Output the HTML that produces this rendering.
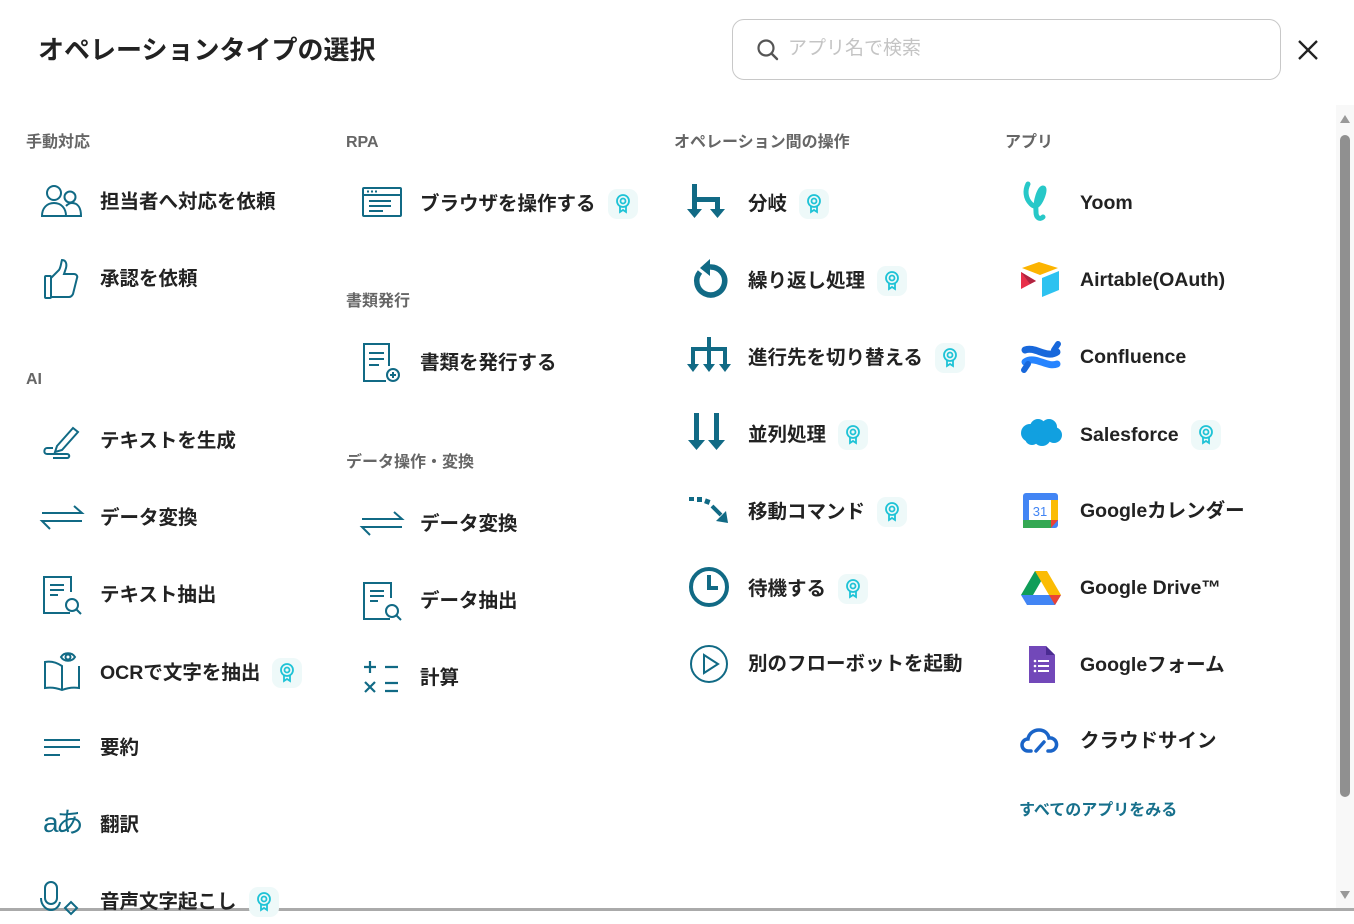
<!DOCTYPE html>
<html><head><meta charset="utf-8"><style>
*{margin:0;padding:0;box-sizing:border-box}
body{width:1354px;height:911px;overflow:hidden;background:#fff;font-family:"Liberation Sans","Noto Sans CJK JP",sans-serif;color:#222;position:relative}
.a{position:absolute}
.h{position:absolute;font-size:16px;color:#666;font-weight:600;line-height:20px}
.t{position:absolute;font-size:19.5px;font-weight:600;line-height:26px;color:#222;white-space:nowrap;display:flex;align-items:center}
.ic{position:absolute;width:46px;height:46px}
.b{display:inline-flex;width:30px;height:30px;border-radius:9px;background:#eef9f9;margin-left:12px;align-items:center;justify-content:center}
svg{display:block}
</style></head><body>
<div class="a" style="left:38px;top:32px;font-size:26px;font-weight:700;line-height:36px;color:#222">オペレーションタイプの選択</div>
<div class="a" style="left:732px;top:19px;width:549px;height:61px;border:1px solid #c8c8c8;border-radius:12px"></div>
<svg class="a" style="left:756px;top:38px" width="24" height="24" viewBox="0 0 24 24"><circle cx="10" cy="10" r="7.5" fill="none" stroke="#555" stroke-width="2.2"/><path d="M15.5 15.5L21 21" stroke="#555" stroke-width="2.4" stroke-linecap="round"/></svg>
<div class="a" style="left:788px;top:36px;font-size:19px;color:#c4c4c4;line-height:26px">アプリ名で検索</div>
<svg class="a" style="left:1297px;top:39px" width="22" height="22" viewBox="0 0 22 22"><path d="M2 2L20 20M20 2L2 20" stroke="#222" stroke-width="2.3"/></svg>

<div class="a" style="left:1336px;top:105px;width:18px;height:806px;background:#f8f8f8"></div>
<div class="a" style="left:1340px;top:135px;width:10px;height:662px;background:#909090;border-radius:5px"></div>
<div class="a" style="left:1340px;top:115px;width:0;height:0;border-left:5px solid transparent;border-right:5px solid transparent;border-bottom:8px solid #999"></div>
<div class="a" style="left:1340px;top:891px;width:0;height:0;border-left:5px solid transparent;border-right:5px solid transparent;border-top:8px solid #999"></div>
<div class="a" style="left:0;top:908px;width:1354px;height:3px;background:#aaa"></div>

<div class="h" style="left:26px;top:133px">手動対応</div>
<div class="h" style="left:26px;top:370px">AI</div>
<div class="h" style="left:346px;top:133px">RPA</div>
<div class="h" style="left:346px;top:292px">書類発行</div>
<div class="h" style="left:346px;top:453px">データ操作・変換</div>
<div class="h" style="left:674px;top:133px">オペレーション間の操作</div>
<div class="h" style="left:1005px;top:133px">アプリ</div>

<svg class="ic" style="left:39px;top:179px" viewBox="0 0 46 46" fill="none" stroke="#116a85" stroke-width="2"><circle cx="15" cy="14" r="7"/><circle cx="31" cy="18" r="5.5"/><path d="M3 37c0-8 5-13 12-13s12 5 12 13z"/><path d="M27 27c2-2 4-3 6-3 6 0 9 5 9 13H27"/></svg>
<div class="t" style="left:100px;top:189px">担当者へ対応を依頼</div>
<svg class="ic" style="left:39px;top:256px" viewBox="0 0 46 46" fill="none" stroke="#116a85" stroke-width="2"><rect x="6" y="20" width="6" height="22" rx="1"/><path d="M12 22l8-8c2-3 2-7 3-10 4 0 5 4 4 8l-2 6h10c2 0 4 2 3 4l-4 16c-1 2-2 3-4 3H12"/></svg>
<div class="t" style="left:100px;top:266px">承認を依頼</div>

<svg class="ic" style="left:39px;top:418px" viewBox="0 0 46 46" fill="none" stroke="#116a85" stroke-width="2"><path d="M18 28L34 10l5 4-16 18-7 2z"/><path d="M14 30H8c-3 0-4 6 0 6h20c3 0 3 4 0 4H14"/></svg>
<div class="t" style="left:100px;top:428px">テキストを生成</div>
<svg class="ic" style="left:39px;top:495px" viewBox="0 0 46 46" fill="none" stroke="#116a85" stroke-width="2"><path d="M3 18h40L35 11M43 26H3l8 8"/></svg>
<div class="t" style="left:100px;top:505px">データ変換</div>
<svg class="ic" style="left:39px;top:572px" viewBox="0 0 46 46" fill="none" stroke="#116a85" stroke-width="2"><path d="M32 20V5H5v36h26"/><path d="M11 13h14M11 18h14M11 23h8"/><circle cx="33" cy="33" r="6"/><path d="M37 37l5 5"/></svg>
<div class="t" style="left:100px;top:582px">テキスト抽出</div>
<svg class="ic" style="left:39px;top:648px" viewBox="0 0 46 46" fill="none" stroke="#116a85" stroke-width="2"><path d="M23 42V18C17 14 11 13 6 14v26c6-1 12 0 17 2 5-2 11-3 17-2V18"/><path d="M22 9c3-5 11-5 14 0-3 5-11 5-14 0z"/><circle cx="29" cy="9" r="2.5"/></svg>
<div class="t" style="left:100px;top:658px">OCRで文字を抽出<span class="b"><svg width="16" height="20" viewBox="0 0 16 20" fill="none" stroke="#1fc3d6" stroke-width="1.8"><circle cx="8" cy="7" r="6"/><circle cx="8" cy="7" r="2.5"/><path d="M5 12v6l3-2 3 2v-6"/></svg></span></div>
<svg class="ic" style="left:39px;top:725px" viewBox="0 0 46 46" fill="none" stroke="#116a85" stroke-width="2"><path d="M5 15h36M5 22h36M5 30h16"/></svg>
<div class="t" style="left:100px;top:735px">要約</div>
<div class="a" style="left:43px;top:805px;font-size:28px;color:#116a85;line-height:36px;letter-spacing:-3px">aあ</div>
<div class="t" style="left:100px;top:812px">翻訳</div>
<svg class="ic" style="left:39px;top:878px" viewBox="0 0 46 46" fill="none" stroke="#116a85" stroke-width="2"><rect x="6" y="4" width="12" height="22" rx="6"/><path d="M2 20c0 8 6 12 10 12s8-3 9-8M26 30l6-6 6 6-6 6z"/></svg>
<div class="t" style="left:100px;top:887px">音声文字起こし<span class="b"><svg width="16" height="20" viewBox="0 0 16 20" fill="none" stroke="#1fc3d6" stroke-width="1.8"><circle cx="8" cy="7" r="6"/><circle cx="8" cy="7" r="2.5"/><path d="M5 12v6l3-2 3 2v-6"/></svg></span></div>

<svg class="ic" style="left:359px;top:179px" viewBox="0 0 46 46" fill="none" stroke="#116a85" stroke-width="2"><rect x="4" y="9" width="38" height="28" rx="1"/><path d="M4 16h38M8 12.5h2M12 12.5h2M16 12.5h2M10 22h22M10 27h22M10 32h14"/></svg>
<div class="t" style="left:420px;top:189px">ブラウザを操作する<span class="b"><svg width="16" height="20" viewBox="0 0 16 20" fill="none" stroke="#1fc3d6" stroke-width="1.8"><circle cx="8" cy="7" r="6"/><circle cx="8" cy="7" r="2.5"/><path d="M5 12v6l3-2 3 2v-6"/></svg></span></div>
<svg class="ic" style="left:359px;top:340px" viewBox="0 0 46 46" fill="none" stroke="#116a85" stroke-width="2"><path d="M30 26V4H5v37h22"/><path d="M10 13h15M10 19h15M10 25h10"/><circle cx="34" cy="35" r="6"/><path d="M34 32v6M31 35h6"/></svg>
<div class="t" style="left:420px;top:350px">書類を発行する</div>
<svg class="ic" style="left:359px;top:501px" viewBox="0 0 46 46" fill="none" stroke="#116a85" stroke-width="2"><path d="M3 18h40L35 11M43 26H3l8 8"/></svg>
<div class="t" style="left:420px;top:511px">データ変換</div>
<svg class="ic" style="left:359px;top:578px" viewBox="0 0 46 46" fill="none" stroke="#116a85" stroke-width="2"><path d="M32 20V5H5v36h26"/><path d="M11 13h14M11 18h14M11 23h8"/><circle cx="33" cy="33" r="6"/><path d="M37 37l5 5"/></svg>
<div class="t" style="left:420px;top:588px">データ抽出</div>
<svg class="ic" style="left:359px;top:655px" viewBox="0 0 46 46" fill="none" stroke="#116a85" stroke-width="2.2"><path d="M5 12h12M11 6v12M26 12h13M6 27l10 10M16 27L6 37M26 28h13M26 36h13"/></svg>
<div class="t" style="left:420px;top:665px">計算</div>

<svg class="ic" style="left:686px;top:179px" viewBox="0 0 46 46" fill="#116a85"><rect x="6" y="5" width="5" height="28"/><rect x="6" y="18" width="28" height="5"/><rect x="29" y="18" width="5" height="15"/><path d="M1 30h15l-7.5 9zM24 30h15l-7.5 9z"/></svg>
<div class="t" style="left:748px;top:189px">分岐<span class="b"><svg width="16" height="20" viewBox="0 0 16 20" fill="none" stroke="#1fc3d6" stroke-width="1.8"><circle cx="8" cy="7" r="6"/><circle cx="8" cy="7" r="2.5"/><path d="M5 12v6l3-2 3 2v-6"/></svg></span></div>
<svg class="ic" style="left:686px;top:256px" viewBox="0 0 46 46" fill="none"><path d="M14 16a14 14 0 1 0 10-5" stroke="#116a85" stroke-width="5.5"/><path d="M24 3v17l-10-8z" fill="#116a85"/></svg>
<div class="t" style="left:748px;top:266px">繰り返し処理<span class="b"><svg width="16" height="20" viewBox="0 0 16 20" fill="none" stroke="#1fc3d6" stroke-width="1.8"><circle cx="8" cy="7" r="6"/><circle cx="8" cy="7" r="2.5"/><path d="M5 12v6l3-2 3 2v-6"/></svg></span></div>
<svg class="ic" style="left:686px;top:333px" viewBox="0 0 46 46" fill="#116a85"><rect x="21" y="4" width="4" height="12"/><rect x="5" y="14" width="36" height="4"/><rect x="5" y="14" width="4" height="20"/><rect x="21" y="14" width="4" height="20"/><rect x="37" y="14" width="4" height="20"/><path d="M1 31h12l-6 8zM17 31h12l-6 8zM33 31h12l-6 8z"/></svg>
<div class="t" style="left:748px;top:343px">進行先を切り替える<span class="b"><svg width="16" height="20" viewBox="0 0 16 20" fill="none" stroke="#1fc3d6" stroke-width="1.8"><circle cx="8" cy="7" r="6"/><circle cx="8" cy="7" r="2.5"/><path d="M5 12v6l3-2 3 2v-6"/></svg></span></div>
<svg class="ic" style="left:686px;top:410px" viewBox="0 0 46 46" fill="#116a85"><rect x="8" y="3" width="5" height="30"/><rect x="28" y="3" width="5" height="30"/><path d="M2 30h17l-8.5 10zM22 30h17l-8.5 10z"/></svg>
<div class="t" style="left:748px;top:420px">並列処理<span class="b"><svg width="16" height="20" viewBox="0 0 16 20" fill="none" stroke="#1fc3d6" stroke-width="1.8"><circle cx="8" cy="7" r="6"/><circle cx="8" cy="7" r="2.5"/><path d="M5 12v6l3-2 3 2v-6"/></svg></span></div>
<svg class="ic" style="left:686px;top:487px" viewBox="0 0 46 46" fill="#116a85"><rect x="3" y="10" width="5" height="4"/><rect x="11" y="10" width="5" height="5"/><rect x="19" y="12" width="5" height="5" transform="rotate(20 21 14)"/><path d="M26 19l9 9" stroke="#116a85" stroke-width="4"/><path d="M30 34l12 2-2-12z"/></svg>
<div class="t" style="left:748px;top:497px">移動コマンド<span class="b"><svg width="16" height="20" viewBox="0 0 16 20" fill="none" stroke="#1fc3d6" stroke-width="1.8"><circle cx="8" cy="7" r="6"/><circle cx="8" cy="7" r="2.5"/><path d="M5 12v6l3-2 3 2v-6"/></svg></span></div>
<svg class="ic" style="left:686px;top:564px" viewBox="0 0 46 46" fill="none" stroke="#116a85"><circle cx="23" cy="23" r="18" stroke-width="4"/><path d="M23 11v13h9" stroke-width="4"/></svg>
<div class="t" style="left:748px;top:574px">待機する<span class="b"><svg width="16" height="20" viewBox="0 0 16 20" fill="none" stroke="#1fc3d6" stroke-width="1.8"><circle cx="8" cy="7" r="6"/><circle cx="8" cy="7" r="2.5"/><path d="M5 12v6l3-2 3 2v-6"/></svg></span></div>
<svg class="ic" style="left:686px;top:641px" viewBox="0 0 46 46" fill="none" stroke="#116a85" stroke-width="2"><circle cx="23" cy="23" r="18"/><path d="M18 14v18l14-9z"/></svg>
<div class="t" style="left:748px;top:651px">別のフローボットを起動</div>

<svg class="ic" style="left:1018px;top:180px" viewBox="0 0 46 46" fill="none"><path d="M10 4c-3 6-3 14 3 20 4 4 7 2 10-4 3-6 4-12 2-12-3 0-8 12-7 24 0 6 4 8 7 5" stroke="#27c8c8" stroke-width="5" stroke-linecap="round"/></svg>
<div class="t" style="left:1080px;top:190px">Yoom</div>
<svg class="ic" style="left:1018px;top:257px" viewBox="0 0 46 46"><path d="M21 5L4 11l18 7 18-7z" fill="#fcb400"/><path d="M24 21v19l17-7V14z" fill="#2dc2f0"/><path d="M3 15v17l15-8z" fill="#e8304a"/><path d="M3 15l15 9-6 3z" fill="#b02440"/></svg>
<div class="t" style="left:1080px;top:267px">Airtable(OAuth)</div>
<svg class="ic" style="left:1018px;top:334px" viewBox="0 0 46 46" fill="none" stroke-linecap="round"><path d="M7 16c10-4 22 9 32 2" stroke="#1868db" stroke-width="7"/><path d="M39 30c-10 4-22-9-32-2" stroke="#2684ff" stroke-width="7"/><path d="M40 10l-4 6M6 36l4-6" stroke="#1868db" stroke-width="6"/></svg>
<div class="t" style="left:1080px;top:344px">Confluence</div>
<svg class="ic" style="left:1018px;top:410px" viewBox="0 0 46 46"><g fill="#11a0e0"><circle cx="12" cy="23" r="9"/><circle cx="20" cy="17" r="8"/><circle cx="31" cy="17" r="8"/><circle cx="36" cy="25" r="8"/><circle cx="24" cy="27" r="9"/><circle cx="14" cy="28" r="7"/></g></svg>
<div class="t" style="left:1080px;top:420px">Salesforce<span class="b"><svg width="16" height="20" viewBox="0 0 16 20" fill="none" stroke="#1fc3d6" stroke-width="1.8"><circle cx="8" cy="7" r="6"/><circle cx="8" cy="7" r="2.5"/><path d="M5 12v6l3-2 3 2v-6"/></svg></span></div>
<svg class="ic" style="left:1018px;top:488px" viewBox="0 0 46 46"><rect x="5" y="5" width="35" height="35" rx="3" fill="#4285f4"/><rect x="5" y="32" width="28" height="8" fill="#34a853"/><rect x="33" y="12" width="7" height="20" fill="#fbbc04"/><path d="M33 32h7l-7 8z" fill="#ea4335"/><rect x="11" y="12" width="22" height="20" fill="#fff"/><text x="22" y="28" font-size="13" fill="#4285f4" text-anchor="middle" font-family="Liberation Sans">31</text></svg>
<div class="t" style="left:1080px;top:498px">Googleカレンダー</div>
<svg class="ic" style="left:1018px;top:565px" viewBox="0 0 46 46"><path d="M17 6h12l-14 24H3z" fill="#0f9d58"/><path d="M17 6h12l14 24H31z" fill="#fbbc04"/><path d="M3 30h40l-6 10H9z" fill="#4285f4"/><path d="M31 30h12l-6 10z" fill="#ea4335"/></svg>
<div class="t" style="left:1080px;top:575px">Google Drive™</div>
<svg class="ic" style="left:1018px;top:642px" viewBox="0 0 46 46"><path d="M11 4h17l9 9v28H11z" fill="#7248b9"/><path d="M28 4v9h9z" fill="#4a2b91"/><g fill="#fff"><circle cx="17" cy="19" r="1.3"/><circle cx="17" cy="24" r="1.3"/><circle cx="17" cy="29" r="1.3"/><rect x="20" y="18" width="11" height="2"/><rect x="20" y="23" width="11" height="2"/><rect x="20" y="28" width="11" height="2"/></g></svg>
<div class="t" style="left:1080px;top:652px">Googleフォーム</div>
<svg class="ic" style="left:1018px;top:718px" viewBox="0 0 46 46" fill="none" stroke="#1a64c8" stroke-width="3.5" stroke-linecap="round"><path d="M13 33H10a6 6 0 0 1 0-12c1-6 6-9 11-9 5 0 9 3 10 8a6.5 6.5 0 0 1 2 13h-3"/><path d="M18 33l8-9"/></svg>
<div class="t" style="left:1080px;top:728px">クラウドサイン</div>
<div class="a" style="left:1019px;top:800px;font-size:16px;font-weight:600;color:#17708c;line-height:22px">すべてのアプリをみる</div>
</body></html>
